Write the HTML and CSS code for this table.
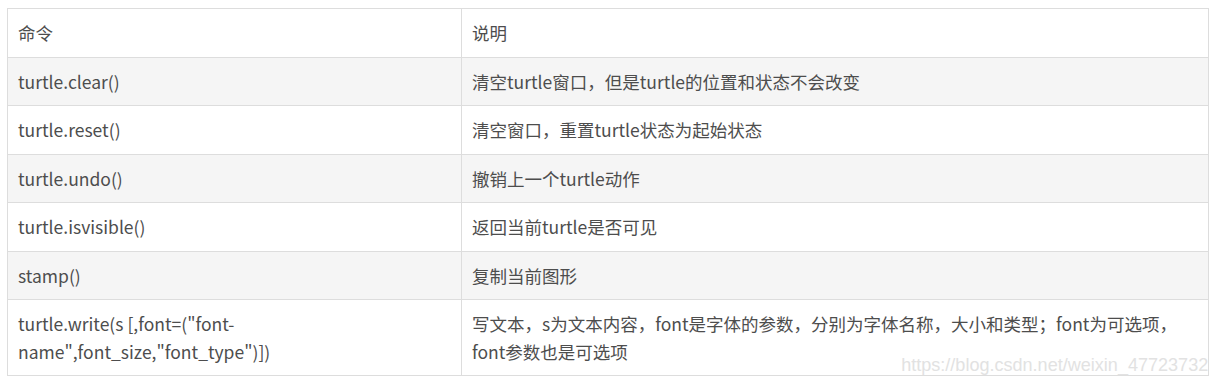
FILE: index.html
```html
<!DOCTYPE html>
<html lang="zh-CN">
<head>
<meta charset="utf-8">
<title>turtle 命令</title>
<link rel="stylesheet" href="styles.css">
</head>
<body>
<div class="wrap">
<table class="cmd-table">
  <tbody>
    <tr><td class="c1">命令</td><td>说明</td></tr>
    <tr><td class="c1">turtle.clear()</td><td>清空turtle窗口，但是turtle的位置和状态不会改变</td></tr>
    <tr><td class="c1">turtle.reset()</td><td>清空窗口，重置turtle状态为起始状态</td></tr>
    <tr><td class="c1">turtle.undo()</td><td>撤销上一个turtle动作</td></tr>
    <tr><td class="c1">turtle.isvisible()</td><td>返回当前turtle是否可见</td></tr>
    <tr><td class="c1">stamp()</td><td>复制当前图形</td></tr>
    <tr><td class="c1">turtle.write(s [,font=("font-name",font_size,"font_type")])</td><td>写文本，s为文本内容，font是字体的参数，分别为字体名称，大小和类型；font为可选项，font参数也是可选项</td></tr>
  </tbody>
</table>
<span class="watermark">https://blog.csdn.net/weixin_47723732</span>
</div>
</body>
</html>
```

FILE: styles.css
```css
html, body {
  margin: 0;
  padding: 0;
  background: #ffffff;
}

body {
  padding: 8px 7px 0 7px;
  font-family: "Noto Sans CJK SC", "Noto Sans", sans-serif;
  font-size: 17.5px;
  color: #4d4d4d;
}

.wrap {
  position: relative;
  width: 1202px;
}

.cmd-table {
  width: 1202px;
  border-collapse: collapse;
  table-layout: fixed;
}

.cmd-table td {
  border: 1px solid #dddddd;
  padding: 10px 10px;
  line-height: 27.5px;
  vertical-align: middle;
  word-break: break-word;
}

.cmd-table td.c1 {
  width: 433px;
}

.cmd-table tr:nth-child(even) td {
  background: #f5f5f5;
}

.watermark {
  position: absolute;
  right: 1px;
  bottom: 0;
  font-family: "Liberation Sans", Arial, sans-serif;
  font-size: 19px;
  line-height: 22px;
  color: #e2e2e2;
  transform-origin: right bottom;
  transform: scaleX(0.95);
  white-space: nowrap;
  pointer-events: none;
}
```
